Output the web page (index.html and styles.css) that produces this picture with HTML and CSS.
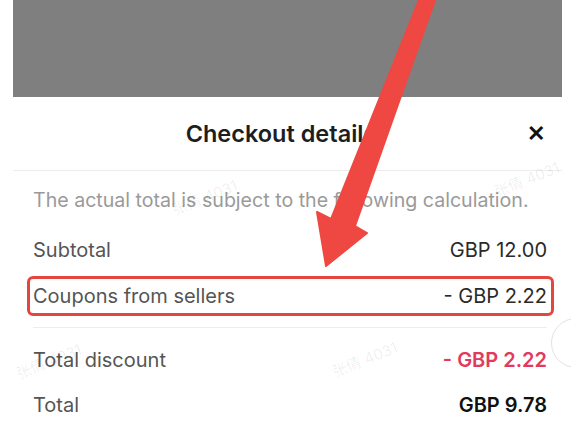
FILE: index.html
```html
<!DOCTYPE html>
<html lang="en">
<head>
    <meta charset="UTF-8">
    <meta name="viewport" content="width=device-width, initial-scale=1.0">
    <title>Checkout details</title>
    <link rel="stylesheet" href="styles.css">
</head>
<body>

    <!-- Dimmed page behind the sheet -->
    <div class="backdrop"></div>

    <!-- Bottom sheet -->
    <div class="sheet">
        <div class="sheet-header">
            <h2 class="sheet-title">Checkout details</h2>
            <span class="close-btn">&#x2715;</span>
        </div>

        <div class="sheet-body">
            <p class="note">The actual total is subject to the following calculation.</p>

            <div class="row">
                <span class="label">Subtotal</span>
                <span class="value">GBP 12.00</span>
            </div>
            <div class="row row-highlight">
                <span class="label">Coupons from sellers</span>
                <span class="value">- GBP 2.22</span>
            </div>

            <div class="divider"></div>

            <div class="row">
                <span class="label">Total discount</span>
                <span class="value discount">- GBP 2.22</span>
            </div>
            <div class="row row-last">
                <span class="label">Total</span>
                <span class="value total">GBP 9.78</span>
            </div>
        </div>
    </div>

    <!-- Watermarks -->
    <span class="watermark wm-1">张倩 4031</span>
    <span class="watermark wm-2">张倩 4031</span>
    <span class="watermark wm-3">张倩 4031</span>
    <span class="watermark wm-4">张倩 4031</span>

    <!-- Floating button edge -->
    <div class="float-edge"></div>

    <!-- Annotation arrow -->
    <svg class="arrow" width="571" height="425" viewBox="0 0 571 425">
        <polygon points="419,0 435,0 355,226 367,233 326,266 317,212 331,219" fill="#ef4741" stroke="#ef4741" stroke-width="2" stroke-linejoin="round"/>
    </svg>

</body>
</html>
```

FILE: styles.css
```css
body {
    margin: 0;
    padding: 0;
    background: #fff;
    font-family: Inter, 'Liberation Sans', 'Noto Sans CJK SC', sans-serif;
    color: #222;
    width: 571px;
    height: 425px;
    overflow: hidden;
    position: relative;
}

.backdrop {
    height: 97px;
    margin: 0 9px 0 13px;
    background: #7f7f7f;
}

.sheet {
    margin: 0 9px 0 13px;
    background: #fff;
}

.sheet-header {
    height: 73px;
    display: flex;
    align-items: center;
    justify-content: center;
    position: relative;
    border-bottom: 1px solid #ececec;
}

.sheet-title {
    margin: 0 13px 0 0;
    font-size: 23.5px;
    font-weight: 600;
    color: #1e1e1e;
}

.close-btn {
    position: absolute;
    right: 17px;
    top: 24px;
    font-size: 22px;
    font-weight: bold;
    color: #111;
    line-height: 24px;
}

.sheet-body {
    padding: 17px 15px 0 20px;
}

.note {
    margin: 0 0 18px 0;
    font-size: 19.6px;
    line-height: 24px;
    color: #9a9a9a;
    white-space: nowrap;
}

.row {
    height: 40px;
    display: flex;
    align-items: center;
    justify-content: space-between;
    font-size: 20px;
}

.row-highlight {
    height: 34px;
    margin: 6px -7px 0 -6px;
    padding: 0 4px 0 3px;
    border: 3px solid #e4463f;
    border-radius: 6px;
}

.row-last {
    margin-top: 5px;
}

.label {
    color: #555;
}

.value {
    color: #2a2a2a;
}

.discount {
    color: #e23a5c;
    font-weight: 600;
}

.total {
    color: #111;
    font-weight: 600;
}

.divider {
    height: 1px;
    background: #ededed;
    margin: 11px 0 12px 0;
}

.watermark {
    position: absolute;
    font-size: 15px;
    color: rgba(0, 0, 0, 0.07);
    transform: rotate(-22deg);
    white-space: nowrap;
}

.wm-1 { left: 170px; top: 186px; }
.wm-2 { left: 492px; top: 168px; }
.wm-3 { left: 14px; top: 350px; }
.wm-4 { left: 330px; top: 348px; }

.float-edge {
    position: absolute;
    right: -30px;
    top: 318px;
    width: 48px;
    height: 48px;
    border-radius: 50%;
    border: 1px solid #e2e2e2;
    background: #fff;
}

.arrow {
    position: absolute;
    left: 0;
    top: 0;
}
```
